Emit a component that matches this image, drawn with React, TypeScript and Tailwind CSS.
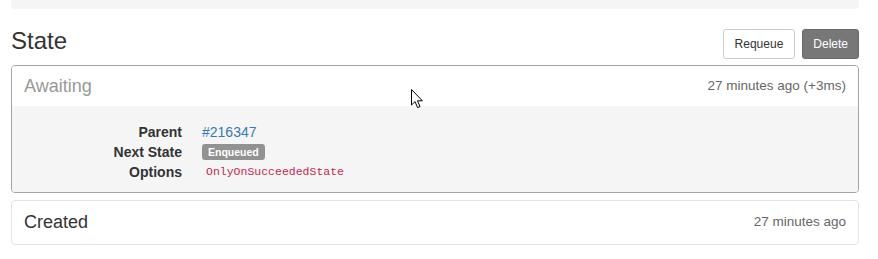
import { FC } from 'react';

const Cursor: FC = () => (
  <svg
    className="absolute left-[410px] top-[88px] pointer-events-none"
    width="14"
    height="22"
    viewBox="0 0 14 22"
  >
    <path
      d="M1.5 1.5 L1.5 17 L5 13.6 L7.6 19.6 L10 18.6 L7.5 12.8 L12.4 12.8 Z"
      fill="#fff"
      stroke="#000"
      strokeWidth="1"
      strokeLinejoin="miter"
    />
  </svg>
);

const Row: FC<{ label: string; children: React.ReactNode }> = ({ label, children }) => (
  <div className="flex leading-[20px]">
    <div className="w-[160px] text-right font-bold text-[14px] text-[#333]">{label}</div>
    <div className="ml-[20px] flex items-center">{children}</div>
  </div>
);

export default function App() {
  return (
    <div
      className="relative w-[878px] h-[259px] bg-white text-[#333] overflow-hidden"
      style={{ fontFamily: '"Liberation Sans", Arial, sans-serif' }}
    >
      <div className="ml-[11px] w-[848px]">
        <div className="h-[9px] bg-[#f5f5f5] rounded-b-[4px]" />

        <div className="mt-[20px] flex items-start justify-between h-[30px]">
          <h3 className="text-[24px] leading-[24px] font-normal text-[#333]">State</h3>
          <div className="flex gap-[7px]">
            <button className="h-[30px] px-[11px] text-[12px] leading-[18px] bg-white border border-[#ccc] rounded-[3px] text-[#333]">
              Requeue
            </button>
            <button className="h-[30px] px-[10px] text-[12px] leading-[18px] bg-[#777] border border-[#6a6a6a] rounded-[3px] text-white">
              Delete
            </button>
          </div>
        </div>

        <div className="mt-[6px] border border-[#a3a3a3] rounded-[4px] overflow-hidden">
          <div className="h-[40px] flex items-center justify-between px-[12px] bg-white">
            <span className="text-[18px] text-[#999]">Awaiting</span>
            <span className="text-[13.5px] text-[#666]">27 minutes ago (+3ms)</span>
          </div>
          <div className="bg-[#f5f5f5] pt-[16px] pb-[10px] px-[10px]">
            <Row label="Parent">
              <span className="text-[14px] text-[#337ab7]">#216347</span>
            </Row>
            <Row label="Next State">
              <span className="bg-[#929292] text-white font-bold text-[10.5px] leading-[16px] px-[6px] rounded-[3px]">
                Enqueued
              </span>
            </Row>
            <Row label="Options">
              <code
                className="px-[4px] text-[11.5px] text-[#c7254e]"
                style={{ fontFamily: '"Liberation Mono", "DejaVu Sans Mono", monospace' }}
              >
                OnlyOnSucceededState
              </code>
            </Row>
          </div>
        </div>

        <div className="mt-[7px] border border-[#e3e3e3] rounded-[4px] h-[45px] flex items-center justify-between px-[12px]">
          <span className="text-[18px] text-[#333]">Created</span>
          <span className="text-[13.5px] text-[#666]">27 minutes ago</span>
        </div>
      </div>
      <Cursor />
    </div>
  );
}
